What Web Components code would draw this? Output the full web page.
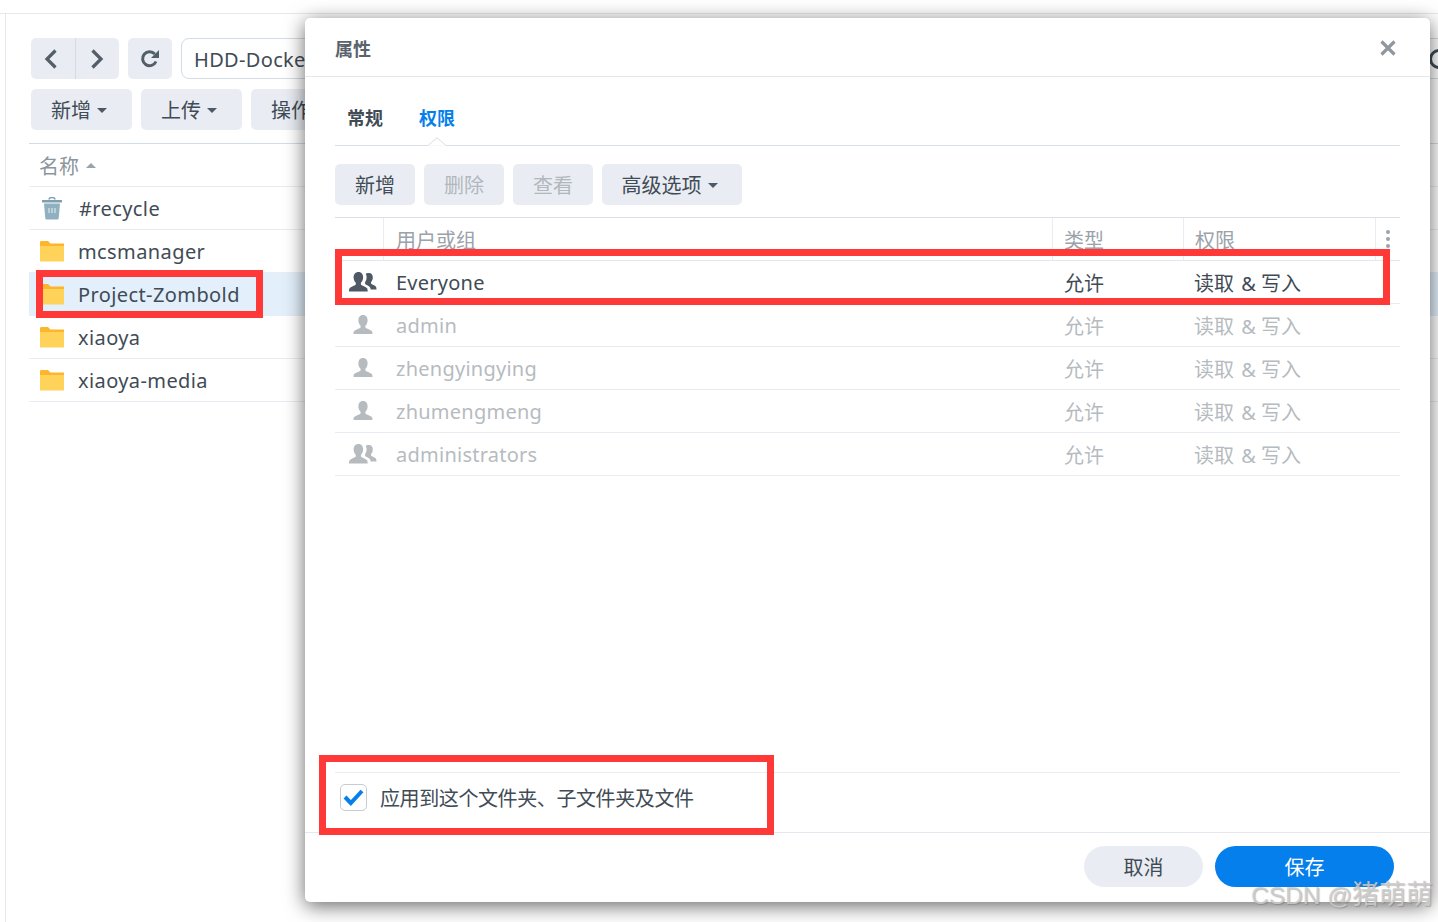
<!DOCTYPE html>
<html lang="zh">
<head>
<meta charset="utf-8">
<style>
  html, body { margin: 0; height: 100%; overflow: hidden; background: #fff; }
  body { font-family: "Noto Sans", "Noto Sans CJK SC", sans-serif; font-size: 20px; color: #414b55; }
</style>
</head>
<body>
<file-station></file-station>
<props-dialog></props-dialog>
<mark-box style="left:36px;top:270px;width:227px;height:48px"></mark-box>
<mark-box style="left:335px;top:249px;width:1055px;height:56px"></mark-box>
<mark-box style="left:319px;top:755px;width:455px;height:80px"></mark-box>
<water-mark></water-mark>

<script>
const FOLDER = `<svg width="24" height="22" viewBox="0 0 24 22"><path d="M0 2.500C0 1.500.6 1 1.500 1h6.500l2.500 2.500H24V8H0z" fill="#fdb52b"/><path d="M0 6h24v15.500H0z" fill="#ffd259"/></svg>`;
const TRASH = `<svg width="20" height="23" viewBox="0 0 20 23"><path d="M7 2.500C7 1 8 .5 10 .5s3 .5 3 2" fill="none" stroke="#7d9fb0" stroke-width="1.500"/><path d="M0 3h20v2.500H0z" fill="#7d9fb0"/><path d="M2 6.500h16l-1.300 14.800q-.1 1.200-1.300 1.200H4.600q-1.200 0-1.300-1.200z" fill="#8fb0c0"/><path d="M7 11v5M10 11v5M13 11v5" stroke="#d5e2e8" stroke-width="1.300"/></svg>`;
const USER = `<svg width="22" height="20" viewBox="0 0 22 20"><path fill="currentColor" d="M11 0c3 0 4.600 2.200 4.600 5.300 0 2.300-.9 4.400-2.200 5.500v1.500c0 1 4.100 2 6.100 3.400.8.600 1 1.800 1 3.300H1.500c0-1.500.2-2.700 1-3.300 2-1.400 6.100-2.400 6.100-3.400v-1.500C7.300 9.700 6.400 7.600 6.400 5.300 6.400 2.200 8 0 11 0z"/></svg>`;
const GROUP = `<svg width="28" height="21" viewBox="0 0 28 21"><path fill="currentColor" d="M20 1c2.500 0 3.800 1.900 3.800 4.500 0 2-.8 3.700-1.800 4.600v1.100c0 1 2.700 1.700 4.300 2.900.8.600 1.200 1.700 1.200 3.400h-5.800c-.3-1.900-1.300-3-3-3.900-1.100-.6-2.400-1.200-2.600-1.800v-1.800c1-1.200 1.500-3 1.500-4.700 0-1.300-.3-2.500-.8-3.400C17.100 1.500 18.400 1 20 1z"/><path fill="currentColor" d="M9.500 0c3 0 4.600 2.200 4.600 5.300 0 2.300-.9 4.400-2.200 5.500v1.500c0 1 3.700 2 5.700 3.400.9.600 1.100 2 1.100 3.800H0c0-1.800.2-3.200 1.100-3.800C3.100 14.300 6.800 13.300 6.800 12.300v-1.500C5.500 9.700 4.600 7.600 4.600 5.300 4.600 2.200 6.500 0 9.500 0z"/></svg>`;

class SynButton extends HTMLElement {
  connectedCallback() {
    const caret = this.hasAttribute('caret');
    this.attachShadow({ mode: 'open' }).innerHTML = `
      <style>
        :host { display: inline-flex; align-items: center; justify-content: center; gap: 6px; height: 41px; border-radius: 5px;
                background: #e9edf3; color: #414b55; font-size: 20px; line-height: 30px; box-sizing: border-box; flex: none; padding-top: 2px; }
        :host([caret]) { padding-right: 5px; }
        :host([disabled]) { color: #b2b7bd; }
        :host([pill]) { border-radius: 21px; }
        :host([primary]) { background: #057feb; color: #fff; }
        i { width: 0; height: 0; border: 5px solid transparent; border-top-color: #4f5965; border-bottom: 0; }
      </style>
      <slot></slot>${caret ? '<i></i>' : ''}`;
  }
}

class FileRow extends HTMLElement {
  connectedCallback() {
    this.attachShadow({ mode: 'open' }).innerHTML = `
      <style>
        :host { display: flex; align-items: center; height: 42px; border-bottom: 1px solid #e9edf3; padding-left: 10px; color: #414b55; letter-spacing: .4px; }
        :host([selected]) { background: #e3f0fc; }
        .ic { width: 39px; display: flex; align-items: center; padding-left: 1px; box-sizing: border-box; }
        :host([trash]) .ic { padding-left: 3px; width: 40px; }
      </style>
      <span class="ic">${this.hasAttribute('trash') ? TRASH : FOLDER}</span><slot></slot>`;
  }
}

class FileStation extends HTMLElement {
  connectedCallback() {
    this.attachShadow({ mode: 'open' }).innerHTML = `
      <style>
        :host { display: block; height: 909px; margin-top: 13px; border-top: 1px solid #e5e8ec; box-sizing: border-box; }
        .pane { height: 100%; margin-left: 5px; border-left: 1px solid #e5e8ec; box-sizing: border-box; padding: 24px 0 0 25px; }
        .bar { display: flex; gap: 9px; height: 41px; }
        .nav { display: flex; width: 88px; height: 41px; border-radius: 5px; background: #e9edf3; flex: none; }
        .nav span { flex: 1; display: flex; align-items: center; justify-content: center; }
        .nav span:first-child svg { margin-right: 3px; }
        .nav span + span { border-left: 1px solid #d3dce4; }
        .refresh { width: 44px; height: 41px; border-radius: 5px; background: #e9edf3; display: flex; align-items: center; justify-content: center; flex: none; }
        .path { flex: 1; margin-right: -20px; display: flex; justify-content: space-between; align-items: center; padding: 2px 8px 0 12px;
                border: 1px solid #d3dce4; border-radius: 8px; box-sizing: border-box; background: #fff; letter-spacing: .33px; white-space: nowrap; }
        .path svg { margin-top: -2px; }
        .actions { margin-top: 10px; }
        .actions syn-button { width: 101px; }
        .list { margin: 13px 0 0 -2px; border-top: 1px solid #d3dce4; }
        .head { display: flex; align-items: center; gap: 7px; height: 42px; padding-left: 10px; color: #8d959d; border-bottom: 1px solid #e9edf3; }
        .head i { width: 0; height: 0; border: 5px solid transparent; border-bottom-color: #9aa2aa; border-top: 0; }
      </style>
      <div class="pane">
        <div class="bar">
          <div class="nav">
            <span><svg width="14" height="22" viewBox="0 0 14 22"><path d="M11.500 2.500 3 11l8.500 8.500" fill="none" stroke="#535e68" stroke-width="3.200"/></svg></span>
            <span><svg width="14" height="22" viewBox="0 0 14 22"><path d="M2.500 2.500 11 11l-8.500 8.500" fill="none" stroke="#535e68" stroke-width="3.200"/></svg></span>
          </div>
          <div class="refresh"><svg width="20" height="20" viewBox="0 0 20 20"><path d="M16 12.500A7 7 0 1 1 14.800 5" fill="none" stroke="#535e68" stroke-width="3"/><path d="M19 1v8h-8z" fill="#535e68"/></svg></div>
          <div class="path">HDD-Docker<svg width="20" height="20" viewBox="0 0 20 20"><circle cx="10" cy="10" r="8.500" fill="none" stroke="#414b55" stroke-width="3"/></svg></div>
        </div>
        <div class="bar actions">
          <syn-button caret>新增</syn-button>
          <syn-button caret>上传</syn-button>
          <syn-button caret>操作</syn-button>
        </div>
        <div class="list">
          <div class="head">名称<i></i></div>
          <file-row trash>#recycle</file-row>
          <file-row>mcsmanager</file-row>
          <file-row selected>Project-Zombold</file-row>
          <file-row>xiaoya</file-row>
          <file-row>xiaoya-media</file-row>
        </div>
      </div>`;
  }
}

class PermRow extends HTMLElement {
  connectedCallback() {
    this.attachShadow({ mode: 'open' }).innerHTML = `
      <style>
        :host { display: grid; grid-template-columns: 61px 668px 130px 1fr; align-items: center; height: 42px; border-bottom: 1px solid #e9edf3; color: #b6bbc0; }
        :host([active]) { color: #414b55; }
        .ic { display: flex; justify-content: center; padding-right: 5px; color: #b6bbc0; }
        :host([active]) .ic { color: #4f5965; }
        .name { letter-spacing: .25px; }
        .amp { margin-left: 2px; }
      </style>
      <div class="ic">${this.hasAttribute('group') ? GROUP : USER}</div>
      <span class="name"><slot></slot></span><span>允许</span><span>读取 <span class="amp">&amp;</span> 写入</span>`;
  }
}

class PropsDialog extends HTMLElement {
  connectedCallback() {
    this.attachShadow({ mode: 'open' }).innerHTML = `
      <style>
        :host { position: absolute; left: 305px; top: 18px; width: 1125px; height: 884px; background: #fff; border-radius: 5px;
                box-shadow: 0 4px 20px rgba(0,0,0,.6); display: flex; flex-direction: column; }
        header { flex: none; padding: 2px 34px 0 30px; height: 56px; display: flex; align-items: center; justify-content: space-between;
                 border-bottom: 1px solid #e3e8ef; font-size: 18px; font-weight: 700; color: #5a636c; }
        .body { flex: 1; padding: 0 30px; display: flex; flex-direction: column; min-height: 0; }
        .tabs { display: flex; gap: 36px; height: 69px; padding: 26px 0 0 12px; box-sizing: border-box; border-bottom: 1px solid #d8dfe6;
                font-size: 18px; font-weight: 700; color: #414b55; line-height: 30px; position: relative; flex: none; }
        .tabs .on { color: #057feb; }
        .tabs svg { position: absolute; left: 92px; bottom: -1px; }
        .tools { display: flex; gap: 9px; margin-top: 18px; flex: none; }
        .tools syn-button { width: 80px; }
        .tools syn-button.wide { width: 140px; }
        .table { margin-top: 12px; border-top: 1px solid #d8dfe6; flex: 1; }
        .thead { display: grid; grid-template-columns: 48px 669px 131px 192px 1fr; height: 42px; border-bottom: 1px solid #e3e8ef; color: #9aa2aa; line-height: 46px; }
        .thead div { border-left: 1px solid #e9edf3; padding-left: 11px; overflow: hidden; }
        .thead div:first-child { border-left: 0; }
        .thead div:nth-child(2) { padding-left: 12px; }
        .thead .more { padding: 0; display: flex; flex-direction: column; align-items: center; justify-content: center; gap: 3px; }
        .more b { width: 4px; height: 4px; border-radius: 50%; background: #9aa2aa; }
        .apply { height: 60px; flex: none; border-top: 1px solid #e9edf3; display: flex; align-items: center; gap: 13px; padding: 0 0 11px 5px; box-sizing: border-box; letter-spacing: -.4px; }
        .check { width: 27px; height: 27px; box-sizing: border-box; border: 1px solid #c5ccd4; border-radius: 5px; display: flex; align-items: center; justify-content: center; }
        footer { height: 70px; flex: none; border-top: 1px solid #e3e8ef; padding: 13px 36px 0 0; box-sizing: border-box; display: flex; justify-content: flex-end; gap: 12px; }
        footer syn-button:first-child { width: 119px; }
        footer syn-button:last-child { width: 179px; }
      </style>
      <header>属性
        <svg width="16" height="16" viewBox="0 0 16 16"><path d="M1.500 1.500l13 13M14.500 1.500l-13 13" stroke="#8f979f" stroke-width="3.200"/></svg>
      </header>
      <div class="body">
        <div class="tabs"><span>常规</span><span class="on">权限</span>
          <svg width="20" height="9" viewBox="0 0 20 9"><path d="M0 8.500h1L10 .7 19 8.500h1" fill="#fff" stroke="#d8dfe6"/><path d="M1 9h18v-.5H1z" fill="#fff"/></svg>
        </div>
        <div class="tools">
          <syn-button>新增</syn-button>
          <syn-button disabled>删除</syn-button>
          <syn-button disabled>查看</syn-button>
          <syn-button class="wide" caret>高级选项</syn-button>
        </div>
        <div class="table">
          <div class="thead"><div></div><div>用户或组</div><div>类型</div><div>权限</div>
            <div class="more"><b></b><b></b><b></b></div></div>
          <perm-row active group>Everyone</perm-row>
          <perm-row>admin</perm-row>
          <perm-row>zhengyingying</perm-row>
          <perm-row>zhumengmeng</perm-row>
          <perm-row group>administrators</perm-row>
        </div>
        <div class="apply">
          <span class="check"><svg width="21" height="18" viewBox="0 0 21 18"><path d="M2 9l5.800 6L19 3" fill="none" stroke="#057feb" stroke-width="4"/></svg></span>
          应用到这个文件夹、子文件夹及文件
        </div>
      </div>
      <footer>
        <syn-button pill>取消</syn-button>
        <syn-button pill primary>保存</syn-button>
      </footer>`;
  }
}

class MarkBox extends HTMLElement {
  connectedCallback() {
    this.attachShadow({ mode: 'open' }).innerHTML = `
      <style>:host { position: absolute; box-sizing: border-box; border: 7px solid #ff3838; pointer-events: none; }</style>`;
  }
}

class WaterMark extends HTMLElement {
  connectedCallback() {
    this.attachShadow({ mode: 'open' }).innerHTML = `
      <style>
        :host { position: absolute; left: 1251px; top: 878px; font-size: 24.500px; line-height: 34px; color: rgba(205,205,205,.85);
                text-shadow: 1px 1px 1px rgba(110,110,110,.45); white-space: nowrap; font-family: "Liberation Sans", "Noto Sans CJK SC", sans-serif; }
        span { font-size: 27px; }
      </style>
      CSDN @<span>猪萌萌</span>`;
  }
}

customElements.define('syn-button', SynButton);
customElements.define('file-row', FileRow);
customElements.define('file-station', FileStation);
customElements.define('perm-row', PermRow);
customElements.define('props-dialog', PropsDialog);
customElements.define('mark-box', MarkBox);
customElements.define('water-mark', WaterMark);
</script>
</body>
</html>
